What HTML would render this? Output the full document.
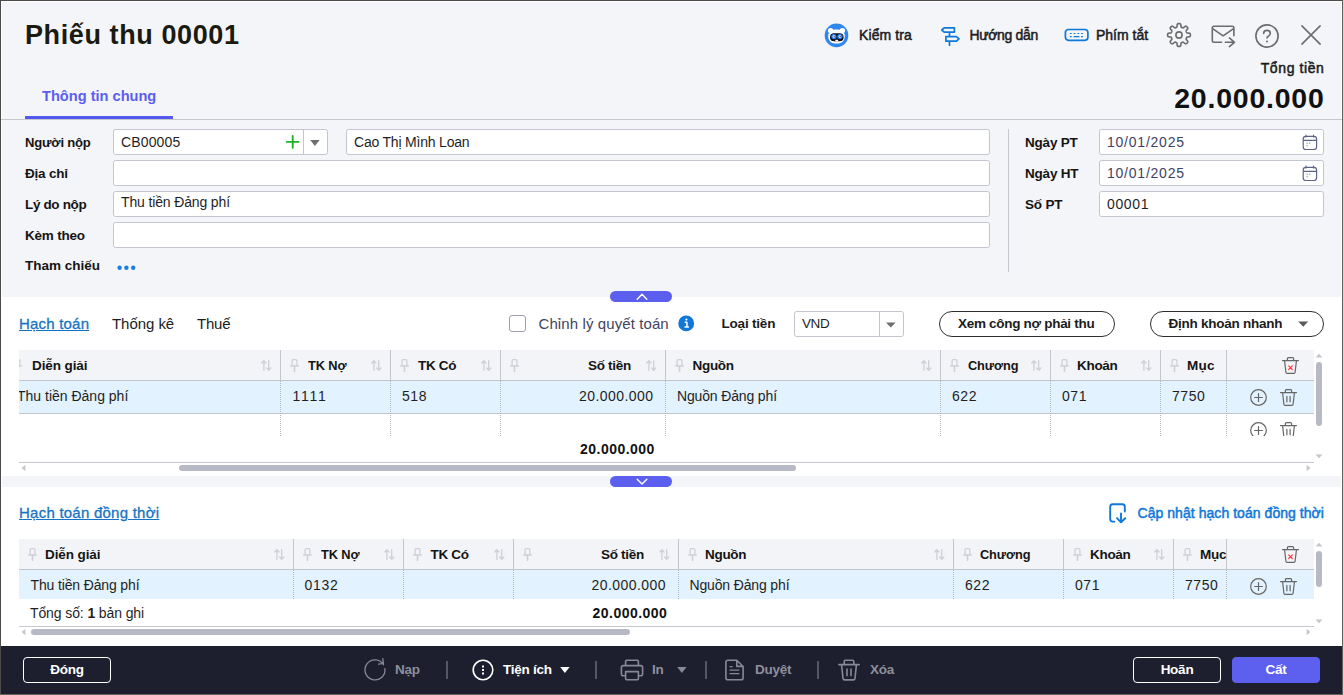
<!DOCTYPE html>
<html lang="vi">
<head>
<meta charset="utf-8">
<title>Phiếu thu 00001</title>
<style>
*{box-sizing:border-box;margin:0;padding:0}
html,body{width:1343px;height:695px;overflow:hidden;background:#fff}
body{position:relative;font-family:"Liberation Sans",sans-serif;font-size:14px;color:#1f1f1f}
.abs{position:absolute}
.t{position:absolute;white-space:nowrap;line-height:20px;font-size:14px;color:#1c1c1c}
.m{-webkit-text-stroke:0.5px currentColor}
.b{font-weight:bold}
.lbl{position:absolute;left:25px;font-weight:bold;font-size:13.5px;letter-spacing:-0.2px;line-height:20px;white-space:nowrap;color:#141414}
.inp{position:absolute;height:26px;background:#fff;border:1px solid #c3c5cf;border-radius:2.5px;font-size:14px;line-height:24px;padding-left:7px;white-space:nowrap;color:#1f1f1f}
.win{position:absolute;left:0;top:0;width:1343px;height:695px;border:1px solid #65635f;border-top-color:#4d4b49;border-left-color:#4d4b49;z-index:50}
.gray{position:absolute;left:2px;width:1339px;background:#f4f5f9}
.panel{position:absolute;left:1px;width:1341px;background:#fff}
.grid{position:absolute;left:19px;width:1295px;overflow:hidden}
.hd{position:absolute;left:0;top:0;width:1295px;height:31px;background:#f3f4f8;border-bottom:1px solid #c3c5ce}
.th{position:absolute;top:5.5px;font-weight:bold;font-size:13.5px;letter-spacing:-0.3px;line-height:20px;white-space:nowrap;color:#141414}
.td{position:absolute;font-size:14px;line-height:20px;white-space:nowrap;color:#1f1f1f}
.vsep{position:absolute;top:0;width:1px;height:30px;background:#c3c5ce}
.dsep{position:absolute;width:0;border-left:1px dotted #b4b7c2}
.row{position:absolute;left:0;width:1295px;background:#e2f2fe}
.pill{position:absolute;top:311px;height:26px;border:1px solid #2e2e2e;border-radius:13px;background:#fff}
.fbtn{position:absolute;top:657px;height:26px;width:88px;border-radius:4px;font-weight:bold;font-size:13.5px;letter-spacing:-0.25px;line-height:23px;text-align:center;color:#fff;border:1px solid #fff}
.ft{position:absolute;font-weight:bold;font-size:13.5px;letter-spacing:-0.25px;line-height:20px;top:660.2px;white-space:nowrap;color:#8d8f9c}
.fsep{position:absolute;top:661px;width:2px;height:18px;background:#555766}
.sb{position:absolute;background:#b7bac4;border-radius:3px}
svg{position:absolute;overflow:visible}
.ic{fill:none;stroke:#6c6c6c;stroke-width:1.6;stroke-linecap:round;stroke-linejoin:round}
.bl{fill:none;stroke:#0f78d8;stroke-width:1.7;stroke-linecap:round;stroke-linejoin:round}
.gi{fill:none;stroke:#666;stroke-width:1.2;stroke-linecap:round;stroke-linejoin:round}
.fi{fill:none;stroke:#878997;stroke-width:1.6;stroke-linecap:round;stroke-linejoin:round}
</style>
</head>
<body>
<svg width="0" height="0" style="left:0;top:0">
  <defs>
    <!-- pin icon, origin = top-left of 8x13 box -->
    <symbol id="pin" viewBox="0 0 9 13" overflow="visible">
      <path d="M2.1 7 V1.7 Q2.1 0.7 3.1 0.7 H5.9 Q6.9 0.7 6.9 1.7 V7 M0.6 7 H8.4" fill="none" stroke="#cfd1d8" stroke-width="1.3" stroke-linecap="round"/><path d="M4.5 7.2 V12.2" fill="none" stroke="#cfd1d8" stroke-width="1.7" stroke-linecap="round"/>
    </symbol>
    <!-- sort icon 10x11 -->
    <symbol id="srt" viewBox="0 0 10 11" overflow="visible">
      <path d="M2.9 10.4 V0.8 M0.8 3 L2.9 0.7 L5 3 M7.7 0.6 V10.2 M5.6 8 L7.7 10.3 L9.8 8" fill="none" stroke="#cfd1d8" stroke-width="1.35" stroke-linecap="round" stroke-linejoin="round"/>
    </symbol>
    <!-- trash 17x17 -->
    <symbol id="trash" viewBox="0 0 17 17" overflow="visible">
      <path class="gi" d="M0.5 3.6 H16.5 M5.4 3.4 V1.6 Q5.4 0.6 6.4 0.6 H10.6 Q11.6 0.6 11.6 1.6 V3.4 M2.6 4 L3.9 15.2 Q4 16.4 5.2 16.4 H11.8 Q13 16.4 13.1 15.2 L14.4 4 M6.9 7.4 V12.8 M10.1 7.4 V12.8"/>
    </symbol>
    <symbol id="trashx" viewBox="0 0 17 17" overflow="visible">
      <path class="gi" d="M0.5 3.6 H16.5 M5.4 3.4 V1.6 Q5.4 0.6 6.4 0.6 H10.6 Q11.6 0.6 11.6 1.6 V3.4 M2.6 4 L3.9 15.2 Q4 16.4 5.2 16.4 H11.8 Q13 16.4 13.1 15.2 L14.4 4"/>
      <path d="M6.7 8.9 L10.3 12.5 M10.3 8.9 L6.7 12.5" fill="none" stroke="#ff3b42" stroke-width="1.2" stroke-linecap="round"/>
    </symbol>
    <!-- plus circle 17x17 -->
    <symbol id="pc" viewBox="0 0 17 17" overflow="visible">
      <circle class="gi" cx="8.5" cy="8.5" r="7.8"/>
      <path class="gi" d="M8.5 4.6 V12.4 M4.6 8.5 H12.4"/>
    </symbol>
  </defs>
</svg>
<!-- ===== HEADER ===== -->
<div class="gray" style="top:2px;height:295px"></div>
<div class="gray" style="top:476px;height:11px"></div>
<div class="t b" style="left:25px;top:18px;font-size:27px;letter-spacing:0.6px;line-height:34px;color:#1b1a10">Phiếu thu 00001</div>

<!-- Kiểm tra -->
<svg style="left:824px;top:23px" width="25" height="25" viewBox="0 0 25 25">
  <circle cx="12.5" cy="12.4" r="11.8" fill="#2f86ee"/>
  <circle cx="6.6" cy="7.6" r="2.7" fill="#fff"/>
  <circle cx="18.4" cy="7.6" r="2.7" fill="#fff"/>
  <rect x="4.2" y="6.6" width="16.6" height="13.8" rx="6.6" fill="#fff"/>
  <rect x="6" y="10.2" width="13.6" height="8" rx="4" fill="#0b0b14"/>
  <circle cx="9.9" cy="13.6" r="2.7" fill="#1f7cf2"/>
  <circle cx="15.9" cy="13.6" r="2.7" fill="#1f7cf2"/>
  <circle cx="9.9" cy="13.6" r="1.3" fill="#e8f1ff"/>
  <circle cx="15.9" cy="13.6" r="1.3" fill="#e8f1ff"/>
  <circle cx="10.2" cy="13.6" r="0.6" fill="#1a1a4a"/>
  <circle cx="16.2" cy="13.6" r="0.6" fill="#1a1a4a"/>
  <rect x="11.2" y="16.8" width="3" height="1.1" rx="0.4" fill="#fff"/>
</svg>
<div class="t m" style="left:859px;top:25px;letter-spacing:0.1px">Kiểm tra</div>

<!-- Hướng dẫn -->
<svg style="left:940px;top:26px" width="21" height="21" viewBox="0 0 21 21">
  <path class="bl" d="M4.2 1.9 H14.4 V6.1 H4.2 L1.8 4 Z M9.5 6.4 V10.3 M5.9 10.6 H16.4 L19 12.9 L16.4 15.2 H5.9 Z M9.5 15.5 V19.3"/>
</svg>
<div class="t m" style="left:969.5px;top:25px;letter-spacing:-0.35px">Hướng dẫn</div>

<!-- Phím tắt -->
<svg style="left:1064px;top:28px" width="26" height="14" viewBox="0 0 26 14">
  <rect class="bl" x="1.4" y="1.5" width="22.5" height="10.8" rx="3"/>
  <path d="M5.9 5.5 H7.7 M9.6 5.5 H11.4 M13.4 5.5 H15.2 M17.1 5.5 H18.9 M5.9 8.6 H7.7 M9.6 8.6 H15.4 M17.1 8.6 H18.9" fill="none" stroke="#0f78d8" stroke-width="1.2"/>
</svg>
<div class="t m" style="left:1096px;top:25px">Phím tắt</div>

<!-- gear -->
<svg style="left:1167px;top:23px" width="24" height="24" viewBox="0 0 24 24">
  <g transform="translate(12 12)">
  <path class="ic" d="M0.00 -11.40 L0.37 -11.39 L0.74 -11.35 L1.11 -11.26 L1.45 -11.05 L1.74 -10.51 L1.89 -9.51 L1.99 -8.52 L2.14 -7.98 L2.35 -7.74 L2.58 -7.60 L2.82 -7.49 L3.06 -7.39 L3.30 -7.29 L3.55 -7.20 L3.81 -7.13 L4.13 -7.15 L4.62 -7.43 L5.39 -8.07 L6.21 -8.66 L6.78 -8.84 L7.18 -8.75 L7.50 -8.55 L7.79 -8.32 L8.06 -8.06 L8.32 -7.79 L8.55 -7.50 L8.75 -7.18 L8.84 -6.78 L8.66 -6.21 L8.07 -5.39 L7.43 -4.62 L7.15 -4.13 L7.13 -3.81 L7.20 -3.55 L7.29 -3.30 L7.39 -3.06 L7.49 -2.82 L7.60 -2.58 L7.74 -2.35 L7.98 -2.14 L8.52 -1.99 L9.51 -1.89 L10.51 -1.74 L11.05 -1.45 L11.26 -1.11 L11.35 -0.74 L11.39 -0.37 L11.40 0.00 L11.39 0.37 L11.35 0.74 L11.26 1.11 L11.05 1.45 L10.51 1.74 L9.51 1.89 L8.52 1.99 L7.98 2.14 L7.74 2.35 L7.60 2.58 L7.49 2.82 L7.39 3.06 L7.29 3.30 L7.20 3.55 L7.13 3.81 L7.15 4.13 L7.43 4.62 L8.07 5.39 L8.66 6.21 L8.84 6.78 L8.75 7.18 L8.55 7.50 L8.32 7.79 L8.06 8.06 L7.79 8.32 L7.50 8.55 L7.18 8.75 L6.78 8.84 L6.21 8.66 L5.39 8.07 L4.62 7.43 L4.13 7.15 L3.81 7.13 L3.55 7.20 L3.30 7.29 L3.06 7.39 L2.82 7.49 L2.58 7.60 L2.35 7.74 L2.14 7.98 L1.99 8.52 L1.89 9.51 L1.74 10.51 L1.45 11.05 L1.11 11.26 L0.74 11.35 L0.37 11.39 L0.00 11.40 L-0.37 11.39 L-0.74 11.35 L-1.11 11.26 L-1.45 11.05 L-1.74 10.51 L-1.89 9.51 L-1.99 8.52 L-2.14 7.98 L-2.35 7.74 L-2.58 7.60 L-2.82 7.49 L-3.06 7.39 L-3.30 7.29 L-3.55 7.20 L-3.81 7.13 L-4.13 7.15 L-4.62 7.43 L-5.39 8.07 L-6.21 8.66 L-6.78 8.84 L-7.18 8.75 L-7.50 8.55 L-7.79 8.32 L-8.06 8.06 L-8.32 7.79 L-8.55 7.50 L-8.75 7.18 L-8.84 6.78 L-8.66 6.21 L-8.07 5.39 L-7.43 4.62 L-7.15 4.13 L-7.13 3.81 L-7.20 3.55 L-7.29 3.30 L-7.39 3.06 L-7.49 2.82 L-7.60 2.58 L-7.74 2.35 L-7.98 2.14 L-8.52 1.99 L-9.51 1.89 L-10.51 1.74 L-11.05 1.45 L-11.26 1.11 L-11.35 0.74 L-11.39 0.37 L-11.40 0.00 L-11.39 -0.37 L-11.35 -0.74 L-11.26 -1.11 L-11.05 -1.45 L-10.51 -1.74 L-9.51 -1.89 L-8.52 -1.99 L-7.98 -2.14 L-7.74 -2.35 L-7.60 -2.58 L-7.49 -2.82 L-7.39 -3.06 L-7.29 -3.30 L-7.20 -3.55 L-7.13 -3.81 L-7.15 -4.13 L-7.43 -4.62 L-8.07 -5.39 L-8.66 -6.21 L-8.84 -6.78 L-8.75 -7.18 L-8.55 -7.50 L-8.32 -7.79 L-8.06 -8.06 L-7.79 -8.32 L-7.50 -8.55 L-7.18 -8.75 L-6.78 -8.84 L-6.21 -8.66 L-5.39 -8.07 L-4.62 -7.43 L-4.13 -7.15 L-3.81 -7.13 L-3.55 -7.20 L-3.30 -7.29 L-3.06 -7.39 L-2.82 -7.49 L-2.58 -7.60 L-2.35 -7.74 L-2.14 -7.98 L-1.99 -8.52 L-1.89 -9.51 L-1.74 -10.51 L-1.45 -11.05 L-1.11 -11.26 L-0.74 -11.35 L-0.37 -11.39 Z"/>
  <circle class="ic" cx="0" cy="0" r="3.1"/>
  </g>
</svg>
<!-- mail -->
<svg style="left:1210px;top:24px" width="26" height="24" viewBox="0 0 26 24">
  <path class="ic" d="M11.6 18.3 H4 Q2.3 18.3 2.3 16.6 V3.9 Q2.3 2.2 4 2.2 H22.2 Q23.9 2.2 23.9 3.9 V11.8 M2.6 4.6 L13.1 11.8 L23.6 4.6 M15.4 18.3 H24.4 M19.4 13.9 L24.5 18.3 L19.4 22.6"/>
</svg>
<!-- help -->
<svg style="left:1255px;top:24px" width="24" height="24" viewBox="0 0 24 24">
  <circle class="ic" cx="12" cy="12" r="11.1"/>
  <path class="ic" d="M8.6 9.4 Q8.8 6.4 12 6.4 Q15.3 6.4 15.3 9.3 Q15.3 11.3 13.4 12.2 Q12 12.9 12 14"/>
  <circle cx="12" cy="17.6" r="1" fill="#6f6f6f"/>
</svg>
<!-- close -->
<svg style="left:1301px;top:25px" width="20" height="20" viewBox="0 0 20 20">
  <path class="ic" d="M0.9 0.9 L19.1 19.1 M19.1 0.9 L0.9 19.1"/>
</svg>

<div class="t b" style="left:42px;top:86px;font-size:14.6px;color:#5b5eee">Thông tin chung</div>
<div class="abs" style="left:25px;top:116px;width:148px;height:3px;background:#5558ee"></div>
<div class="abs" style="left:1px;top:119px;width:1341px;height:1px;background:#c6c8d0"></div>

<div class="t m" style="right:18.5px;top:58.2px;font-size:14px;letter-spacing:0.6px;color:#1a1a1a">Tổng tiền</div>
<div class="t b" style="right:18.5px;top:82px;font-size:27px;line-height:34px;letter-spacing:0.75px;transform:scaleX(1.055);transform-origin:100% 50%;color:#111">20.000.000</div>

<!-- ===== FORM ===== -->
<div class="lbl" style="top:132.5px;letter-spacing:-0.2px;transform:scaleX(0.968);transform-origin:0 50%">Người nộp</div>
<div class="lbl" style="top:163.5px">Địa chỉ</div>
<div class="lbl" style="top:194.5px;letter-spacing:-0.35px">Lý do nộp</div>
<div class="lbl" style="top:225.5px">Kèm theo</div>
<div class="lbl" style="top:256px;letter-spacing:0">Tham chiếu</div>
<svg style="left:117px;top:265px" width="20" height="6" viewBox="0 0 20 6">
  <circle cx="2.6" cy="2.8" r="2.2" fill="#1a7fe0"/><circle cx="9.4" cy="2.8" r="2.2" fill="#1a7fe0"/><circle cx="16.2" cy="2.8" r="2.2" fill="#1a7fe0"/>
</svg>

<div class="inp" style="left:113px;top:129px;width:215px;letter-spacing:0.15px">CB00005</div>
<div class="abs" style="left:303px;top:130px;width:1px;height:24px;background:#c3c5cf"></div>
<svg style="left:285px;top:134px" width="16" height="16" viewBox="0 0 16 16">
  <path d="M7.7 2 V13.8 M1.8 7.9 H13.6" fill="none" stroke="#1fb325" stroke-width="1.9" stroke-linecap="round"/>
</svg>
<svg style="left:309px;top:139px" width="12" height="8" viewBox="0 0 12 8"><path d="M1.2 0.9 H10.6 L5.9 6.9 Z" fill="#6e6e6e"/></svg>

<div class="inp" style="left:346px;top:129px;width:644px;letter-spacing:-0.2px">Cao Thị Mình Loan</div>
<div class="inp" style="left:113px;top:160px;width:877px"></div>
<div class="inp" style="left:113px;top:191px;width:877px;line-height:20px;letter-spacing:-0.14px">Thu tiền Đảng phí</div>
<div class="inp" style="left:113px;top:222px;width:877px"></div>

<div class="abs" style="left:1008px;top:129px;width:1px;height:143px;background:#c6c8d0"></div>
<div class="lbl" style="left:1025px;top:132.5px">Ngày PT</div>
<div class="lbl" style="left:1025px;top:163.5px">Ngày HT</div>
<div class="lbl" style="left:1025px;top:194.5px">Số PT</div>
<div class="inp" style="left:1099px;top:129px;width:225px;color:#3d4266;letter-spacing:0.77px">10/01/2025</div>
<div class="inp" style="left:1099px;top:160px;width:225px;color:#3d4266;letter-spacing:0.77px">10/01/2025</div>
<div class="inp" style="left:1099px;top:191px;width:225px;letter-spacing:0.64px">00001</div>
<svg style="left:1302px;top:133.7px" width="16" height="17" viewBox="0 0 16 17">
  <path d="M4 1 V3 M11.6 1 V3 M1.2 6.4 H14.6 M3.8 2.3 H11.8 Q14.6 2.3 14.6 5.1 V12.7 Q14.6 15.5 11.8 15.5 H3.8 Q1.2 15.5 1.2 12.7 V5.1 Q1.2 2.3 3.8 2.3 Z" fill="none" stroke="#5d6489" stroke-width="1.2" stroke-linecap="round"/>
  <path d="M4.6 9.2 H5.6 M7.3 9.2 H8.3 M4.6 11.8 H5.6" fill="none" stroke="#5d6489" stroke-width="1"/>
</svg>
<svg style="left:1302px;top:164.7px" width="16" height="17" viewBox="0 0 16 17">
  <path d="M4 1 V3 M11.6 1 V3 M1.2 6.4 H14.6 M3.8 2.3 H11.8 Q14.6 2.3 14.6 5.1 V12.7 Q14.6 15.5 11.8 15.5 H3.8 Q1.2 15.5 1.2 12.7 V5.1 Q1.2 2.3 3.8 2.3 Z" fill="none" stroke="#5d6489" stroke-width="1.2" stroke-linecap="round"/>
  <path d="M4.6 9.2 H5.6 M7.3 9.2 H8.3 M4.6 11.8 H5.6" fill="none" stroke="#5d6489" stroke-width="1"/>
</svg>
<!-- ===== PANEL 1 ===== -->
<div class="abs" style="left:610px;top:291px;width:62px;height:11px;border-radius:5.5px;background:#5c5fee"></div>
<svg style="left:636px;top:293px" width="12" height="8" viewBox="0 0 12 8"><path d="M1.2 6.3 L6 1.3 L10.8 6.3" fill="none" stroke="#fff" stroke-width="1.4" stroke-linecap="round" stroke-linejoin="round"/></svg>

<div class="t" style="left:19px;top:314px;font-size:15px;letter-spacing:0.2px;color:#1573c4;-webkit-text-stroke:0.3px #1573c4;text-decoration:underline;text-underline-offset:1px">Hạch toán</div>
<div class="t" style="left:112px;top:314px;font-size:15px;letter-spacing:-0.05px">Thống kê</div>
<div class="t" style="left:197px;top:314px;font-size:15px;letter-spacing:-0.2px">Thuế</div>

<div class="abs" style="left:509px;top:315px;width:17px;height:17px;border:1px solid #9b9eb4;border-radius:3px;background:#fff"></div>
<div class="t" style="left:538.5px;top:314px;font-size:15px;letter-spacing:0.1px;color:#42445f">Chỉnh lý quyết toán</div>
<svg style="left:678px;top:315px" width="17" height="17" viewBox="0 0 17 17">
  <circle cx="8.2" cy="8.4" r="7.9" fill="#0f78d8"/>
  <path d="M7.2 7.3 H8.9 V11.9 M7 12 H10.4" fill="none" stroke="#fff" stroke-width="1.5" stroke-linecap="round" stroke-linejoin="round"/>
  <circle cx="8.4" cy="4.6" r="1.05" fill="#fff"/>
</svg>
<div class="t b" style="left:721.5px;top:314px;font-size:13.5px;letter-spacing:-0.2px">Loại tiền</div>
<div class="inp" style="left:794px;top:311px;width:110px;font-size:13.5px;letter-spacing:-0.4px;padding-left:7px">VND</div>
<div class="abs" style="left:879px;top:312px;width:1px;height:24px;background:#c3c5cf"></div>
<svg style="left:885px;top:322px" width="12" height="7" viewBox="0 0 12 7"><path d="M1 0.5 H10.6 L5.8 5.6 Z" fill="#6e6e6e"/></svg>

<div class="pill" style="left:939px;width:176px"></div>
<div class="t b" style="left:958px;top:313.5px;font-size:13.5px;letter-spacing:-0.3px">Xem công nợ phải thu</div>
<div class="pill" style="left:1150px;width:174px"></div>
<div class="t b" style="left:1168.5px;top:313.5px;font-size:13.5px;letter-spacing:-0.25px">Định khoản nhanh</div>
<svg style="left:1297px;top:321px" width="12" height="7" viewBox="0 0 12 7"><path d="M1.2 0.5 H11.2 L6.2 5.8 Z" fill="#5a5a5a"/></svg>

<div class="grid" style="top:350px;height:86px">
  <div class="hd"></div>
  <div class="row" style="top:31px;height:33px;border-bottom:1px solid #c3c5ce"></div>
  <!-- header seps -->
  <div class="vsep" style="left:261px"></div><div class="vsep" style="left:371px"></div><div class="vsep" style="left:481px"></div><div class="vsep" style="left:646px"></div><div class="vsep" style="left:921px"></div><div class="vsep" style="left:1031px"></div><div class="vsep" style="left:1141px"></div><div class="vsep" style="left:1207px"></div>
  <!-- body dotted seps -->
  <div class="dsep" style="left:261px;top:31px;height:55px"></div><div class="dsep" style="left:371px;top:31px;height:55px"></div><div class="dsep" style="left:481px;top:31px;height:55px"></div><div class="dsep" style="left:646px;top:31px;height:55px"></div><div class="dsep" style="left:921px;top:31px;height:55px"></div><div class="dsep" style="left:1031px;top:31px;height:55px"></div><div class="dsep" style="left:1141px;top:31px;height:55px"></div><div class="dsep" style="left:1207px;top:31px;height:55px"></div>
  <!-- header cells -->
  <svg style="left:-6px;top:9px" width="9" height="13"><use href="#pin"/></svg>
  <div class="th" style="left:13px;letter-spacing:-0.1px">Diễn giải</div>
  <svg style="left:242px;top:10px" width="10" height="11"><use href="#srt"/></svg>
  <svg style="left:271px;top:9px" width="9" height="13"><use href="#pin"/></svg>
  <div class="th" style="left:289px;letter-spacing:-0.1px;transform:scaleX(0.95);transform-origin:0 50%">TK Nợ</div>
  <svg style="left:352px;top:10px" width="10" height="11"><use href="#srt"/></svg>
  <svg style="left:381px;top:9px" width="9" height="13"><use href="#pin"/></svg>
  <div class="th" style="left:399px">TK Có</div>
  <svg style="left:462px;top:10px" width="10" height="11"><use href="#srt"/></svg>
  <svg style="left:491px;top:9px" width="9" height="13"><use href="#pin"/></svg>
  <div class="th" style="left:569px">Số tiền</div>
  <svg style="left:627px;top:10px" width="10" height="11"><use href="#srt"/></svg>
  <svg style="left:656px;top:9px" width="9" height="13"><use href="#pin"/></svg>
  <div class="th" style="left:673.5px">Nguồn</div>
  <svg style="left:902px;top:10px" width="10" height="11"><use href="#srt"/></svg>
  <svg style="left:931px;top:9px" width="9" height="13"><use href="#pin"/></svg>
  <div class="th" style="left:948.5px;letter-spacing:-0.1px;transform:scaleX(0.945);transform-origin:0 50%">Chương</div>
  <svg style="left:1012px;top:10px" width="10" height="11"><use href="#srt"/></svg>
  <svg style="left:1041px;top:9px" width="9" height="13"><use href="#pin"/></svg>
  <div class="th" style="left:1058px">Khoản</div>
  <svg style="left:1122px;top:10px" width="10" height="11"><use href="#srt"/></svg>
  <svg style="left:1151px;top:9px" width="9" height="13"><use href="#pin"/></svg>
  <div class="th" style="left:1168px;letter-spacing:0.2px">Mục</div>
  <svg style="left:1262.5px;top:7px" width="17" height="17"><use href="#trashx"/></svg>
  <!-- row 1 -->
  <div class="td" style="left:-2px;top:36px;letter-spacing:0">Thu tiền Đảng phí</div>
  <div class="td" style="left:273.5px;top:36px;letter-spacing:1.75px">1111</div>
  <div class="td" style="left:383px;top:36px;letter-spacing:0.57px">518</div>
  <div class="td" style="left:560px;top:36px;letter-spacing:0.44px">20.000.000</div>
  <div class="td" style="left:658px;top:36px;letter-spacing:-0.15px">Nguồn Đảng phí</div>
  <div class="td" style="left:933px;top:36px;letter-spacing:0.55px">622</div>
  <div class="td" style="left:1043px;top:36px;letter-spacing:0.55px">071</div>
  <div class="td" style="left:1153px;top:36px;letter-spacing:0.55px">7750</div>
  <svg style="left:1231px;top:39px" width="17" height="17"><use href="#pc"/></svg>
  <svg style="left:1261px;top:39px" width="17" height="17"><use href="#trash"/></svg>
  <!-- row 2 -->
  <svg style="left:1231px;top:72px" width="17" height="17"><use href="#pc"/></svg>
  <svg style="left:1261px;top:72px" width="17" height="17"><use href="#trash"/></svg>
</div>
<div class="t b" style="left:580px;top:439px;letter-spacing:0.48px;color:#111">20.000.000</div>
<div class="abs" style="left:19px;top:462px;width:1295px;height:1px;background:#c6c8d0"></div>
<!-- scrollbars -->
<div class="sb" style="left:179px;top:465px;width:617px;height:6px"></div>
<svg style="left:21px;top:464px" width="5" height="8" viewBox="0 0 5 8"><path d="M4.4 0.8 V7.2 L0.6 4 Z" fill="#c4c6cc"/></svg>
<svg style="left:1306px;top:464px" width="5" height="8" viewBox="0 0 5 8"><path d="M0.6 0.8 V7.2 L4.4 4 Z" fill="#c4c6cc"/></svg>
<div class="sb" style="left:1316px;top:362px;width:6px;height:64px"></div>
<svg style="left:1315px;top:353px" width="8" height="5" viewBox="0 0 8 5"><path d="M0.6 4.4 H7.4 L4 0.8 Z" fill="#c4c6cc"/></svg>
<svg style="left:1315px;top:454px" width="8" height="5" viewBox="0 0 8 5"><path d="M0.6 0.6 H7.4 L4 4.2 Z" fill="#c4c6cc"/></svg>
<!-- ===== PANEL 2 ===== -->
<div class="abs" style="left:610px;top:476px;width:62px;height:11px;border-radius:5.5px;background:#5c5fee"></div>
<svg style="left:636px;top:478px" width="12" height="8" viewBox="0 0 12 8"><path d="M1.2 1.2 L6 6.1 L10.8 1.2" fill="none" stroke="#fff" stroke-width="1.4" stroke-linecap="round" stroke-linejoin="round"/></svg>

<div class="t" style="left:19px;top:503px;font-size:15px;letter-spacing:0.24px;color:#1573c4;-webkit-text-stroke:0.3px #1573c4;text-decoration:underline;text-underline-offset:1px">Hạch toán đồng thời</div>
<svg style="left:1108px;top:502px" width="20" height="22" viewBox="0 0 20 22">
  <path class="bl" style="stroke-width:1.9" d="M6.4 19.6 H4.7 Q2.2 19.6 2.2 17.1 V4.7 Q2.2 2.2 4.7 2.2 H14.3 Q16.8 2.2 16.8 4.7 V9.6 M13 11.4 V20.2 M9 16.2 L13 20.3 L17.2 16.2"/>
</svg>
<div class="t m" style="right:19px;top:503px;color:#0f78d8;letter-spacing:0.05px">Cập nhật hạch toán đồng thời</div>

<div class="grid" style="top:539px;height:60px">
  <div class="hd"></div>
  <div class="row" style="top:31px;height:29px"></div>
  <div class="vsep" style="left:274px"></div><div class="vsep" style="left:384px"></div><div class="vsep" style="left:494px"></div><div class="vsep" style="left:659px"></div><div class="vsep" style="left:934px"></div><div class="vsep" style="left:1044px"></div><div class="vsep" style="left:1154px"></div><div class="vsep" style="left:1207px"></div>
  <div class="dsep" style="left:274px;top:31px;height:29px"></div><div class="dsep" style="left:384px;top:31px;height:29px"></div><div class="dsep" style="left:494px;top:31px;height:29px"></div><div class="dsep" style="left:659px;top:31px;height:29px"></div><div class="dsep" style="left:934px;top:31px;height:29px"></div><div class="dsep" style="left:1044px;top:31px;height:29px"></div><div class="dsep" style="left:1154px;top:31px;height:29px"></div><div class="dsep" style="left:1207px;top:31px;height:29px"></div>
  <svg style="left:9px;top:9px" width="9" height="13"><use href="#pin"/></svg>
  <div class="th" style="left:26px;letter-spacing:-0.1px">Diễn giải</div>
  <svg style="left:255px;top:10px" width="10" height="11"><use href="#srt"/></svg>
  <svg style="left:284px;top:9px" width="9" height="13"><use href="#pin"/></svg>
  <div class="th" style="left:301.5px;letter-spacing:-0.1px;transform:scaleX(0.95);transform-origin:0 50%">TK Nợ</div>
  <svg style="left:365px;top:10px" width="10" height="11"><use href="#srt"/></svg>
  <svg style="left:394px;top:9px" width="9" height="13"><use href="#pin"/></svg>
  <div class="th" style="left:411.5px">TK Có</div>
  <svg style="left:475px;top:10px" width="10" height="11"><use href="#srt"/></svg>
  <svg style="left:504px;top:9px" width="9" height="13"><use href="#pin"/></svg>
  <div class="th" style="left:582px">Số tiền</div>
  <svg style="left:640px;top:10px" width="10" height="11"><use href="#srt"/></svg>
  <svg style="left:669px;top:9px" width="9" height="13"><use href="#pin"/></svg>
  <div class="th" style="left:686px">Nguồn</div>
  <svg style="left:915px;top:10px" width="10" height="11"><use href="#srt"/></svg>
  <svg style="left:944px;top:9px" width="9" height="13"><use href="#pin"/></svg>
  <div class="th" style="left:961px;letter-spacing:-0.1px;transform:scaleX(0.945);transform-origin:0 50%">Chương</div>
  <svg style="left:1054px;top:9px" width="9" height="13"><use href="#pin"/></svg>
  <div class="th" style="left:1071px">Khoản</div>
  <svg style="left:1135px;top:10px" width="10" height="11"><use href="#srt"/></svg>
  <svg style="left:1164px;top:9px" width="9" height="13"><use href="#pin"/></svg>
  <div class="th" style="left:1181px;width:26px;overflow:hidden">Mục</div>
  <svg style="left:1262.5px;top:7px" width="17" height="17"><use href="#trashx"/></svg>
  <!-- row -->
  <div class="td" style="left:11.5px;top:36px;letter-spacing:-0.14px">Thu tiền Đảng phí</div>
  <div class="td" style="left:285.5px;top:36px;letter-spacing:0.68px">0132</div>
  <div class="td" style="left:572.5px;top:36px;letter-spacing:0.44px">20.000.000</div>
  <div class="td" style="left:670.5px;top:36px;letter-spacing:-0.15px">Nguồn Đảng phí</div>
  <div class="td" style="left:946px;top:36px;letter-spacing:0.55px">622</div>
  <div class="td" style="left:1056px;top:36px;letter-spacing:0.55px">071</div>
  <div class="td" style="left:1166px;top:36px;letter-spacing:0.55px">7750</div>
  <svg style="left:1231px;top:39px" width="17" height="17"><use href="#pc"/></svg>
  <svg style="left:1261px;top:39px" width="17" height="17"><use href="#trash"/></svg>
</div>
<div class="t" style="left:30px;top:603px;letter-spacing:-0.11px;color:#1f1f1f">Tổng số: <b>1</b> bản ghi</div>
<div class="t b" style="left:592.5px;top:603px;letter-spacing:0.48px;color:#111">20.000.000</div>
<div class="abs" style="left:19px;top:626px;width:1295px;height:1px;background:#c6c8d0"></div>
<div class="sb" style="left:31px;top:629px;width:599px;height:6px"></div>
<svg style="left:21px;top:628px" width="5" height="8" viewBox="0 0 5 8"><path d="M4.4 0.8 V7.2 L0.6 4 Z" fill="#c4c6cc"/></svg>
<svg style="left:1306px;top:628px" width="5" height="8" viewBox="0 0 5 8"><path d="M0.6 0.8 V7.2 L4.4 4 Z" fill="#c4c6cc"/></svg>
<div class="sb" style="left:1316px;top:551px;width:6px;height:36px"></div>
<svg style="left:1315px;top:542px" width="8" height="5" viewBox="0 0 8 5"><path d="M0.6 4.4 H7.4 L4 0.8 Z" fill="#c4c6cc"/></svg>
<svg style="left:1315px;top:619px" width="8" height="5" viewBox="0 0 8 5"><path d="M0.6 0.6 H7.4 L4 4.2 Z" fill="#c4c6cc"/></svg>

<!-- ===== FOOTER ===== -->
<div class="abs" style="left:1px;top:646px;width:1341px;height:48px;background:#1d1f2e"></div>
<div class="fbtn" style="left:23px">Đóng</div>
<div class="fbtn" style="left:1133px">Hoãn</div>
<div class="fbtn" style="left:1232px;background:#5d5fef;border-color:#5d5fef">Cất</div>

<svg style="left:363px;top:658px" width="24" height="24" viewBox="0 0 24 24">
  <path class="fi" style="stroke-width:1.3" d="M21.2 8 A10 10 0 1 0 22 12 M21.3 1.8 V6.6 H16.4" transform="rotate(-8 12 12)"/>
</svg>
<div class="ft" style="left:395px">Nạp</div>
<div class="fsep" style="left:446px"></div>
<svg style="left:471px;top:658px" width="24" height="24" viewBox="0 0 24 24">
  <circle cx="12" cy="12" r="9.8" fill="none" stroke="#fff" stroke-width="1.6"/>
  <rect x="11" y="7.5" width="2" height="2" fill="#fff"/><rect x="11" y="11" width="2" height="2" fill="#fff"/><rect x="11" y="14.5" width="2" height="2" fill="#fff"/>
</svg>
<div class="ft" style="left:503px;color:#fff">Tiện ích</div>
<svg style="left:559px;top:666px" width="12" height="8" viewBox="0 0 12 8"><path d="M1.2 1 H10.6 L5.9 6.9 Z" fill="#fff"/></svg>
<div class="fsep" style="left:595px"></div>
<svg style="left:620px;top:659px" width="24" height="22" viewBox="0 0 24 22">
  <path class="fi" d="M5.6 6.3 V2.4 Q5.6 1.2 6.8 1.2 H17.2 Q18.4 1.2 18.4 2.4 V6.3 M5.4 16.8 H3.4 Q1.4 16.8 1.4 14.8 V8.6 Q1.4 6.6 3.4 6.6 H20.6 Q22.6 6.6 22.6 8.6 V14.8 Q22.6 16.8 20.6 16.8 H18.6 M5.6 12.6 H18.4 V19.6 Q18.4 20.8 17.2 20.8 H6.8 Q5.6 20.8 5.6 19.6 Z"/>
</svg>
<div class="ft" style="left:652px">In</div>
<svg style="left:676px;top:666px" width="12" height="8" viewBox="0 0 12 8"><path d="M1.2 1 H10.6 L5.9 6.9 Z" fill="#878997"/></svg>
<div class="fsep" style="left:705px"></div>
<svg style="left:724px;top:659px" width="21" height="22" viewBox="0 0 21 22">
  <path class="fi" d="M12.8 1.2 H4 Q1.9 1.2 1.9 3.3 V18.7 Q1.9 20.8 4 20.8 H17 Q19.1 20.8 19.1 18.7 V7.5 Z M12.8 1.4 V7.4 H19"/>
  <path d="M5.6 7.6 H8.6 M5.6 11.2 H15.4 M5.6 14.7 H15.4" fill="none" stroke="#878997" stroke-width="1.3"/>
</svg>
<div class="ft" style="left:755px">Duyệt</div>
<div class="fsep" style="left:817px"></div>
<svg style="left:838px;top:659px" width="22" height="22" viewBox="0 0 22 22">
  <path class="fi" d="M0.8 5.6 H21.2 M6.2 5.4 V2.6 Q6.2 1.2 7.6 1.2 H14.4 Q15.8 1.2 15.8 2.6 V5.4 M3.6 6 L5 19.4 Q5.2 20.9 6.7 20.9 H15.3 Q16.8 20.9 17 19.4 L18.4 6 M9 10 V16.6 M13 10 V16.6"/>
</svg>
<div class="ft" style="left:870px">Xóa</div>

<div class="win"></div>
</body>
</html>
